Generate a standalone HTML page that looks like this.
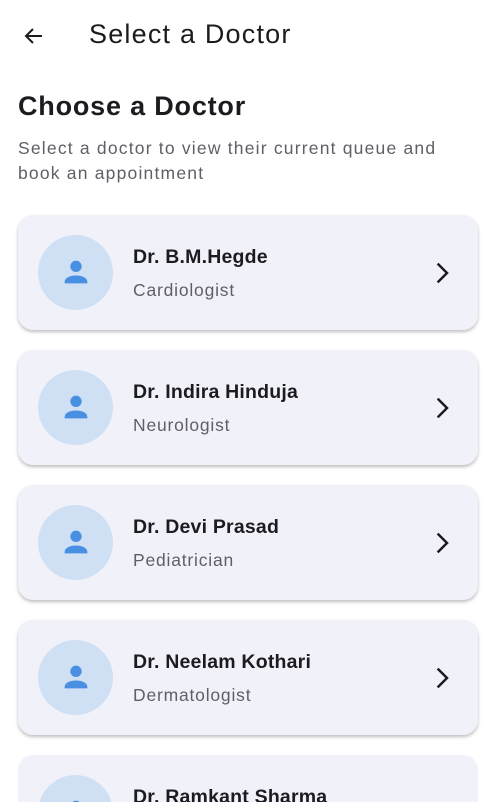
<!DOCTYPE html>
<html><head><style>
html,body{margin:0;width:494px;height:802px;overflow:hidden}
body{background:#fff;font-family:"Liberation Sans",sans-serif;position:relative}
.t{position:absolute;white-space:nowrap}
.card{position:absolute;left:18px;width:460px;height:115px;background:#f1f2f9;border-radius:15px;box-shadow:0 2px 3px rgba(0,0,0,.25)}
.last{height:47px;border-radius:15px 15px 0 0;box-shadow:none}
.av{position:absolute;left:20px;top:20px;width:75px;height:75px;border-radius:50%;background:#d0e0f4;overflow:hidden}
.last .av{height:75px}
.av svg{position:absolute;left:21px;top:20px}
.n{position:absolute;left:115px;top:31px;font-size:19.5px;font-weight:bold;color:#1c1b1f;letter-spacing:0.2px}
.s{position:absolute;left:115px;top:65px;font-size:17.5px;color:#605e66;letter-spacing:.8px}
.ch{position:absolute;left:409px;top:43px}
</style></head><body>
<svg class="t" style="left:22px;top:24px" width="24" height="24" viewBox="0 0 24 24"><path d="M20 12H4M11 5l-7 7 7 7" fill="none" stroke="#1c1b1f" stroke-width="2"/></svg>
<div class="t" style="left:89px;top:19px;font-size:27px;color:#1c1b1f;letter-spacing:1.2px">Select a Doctor</div>
<div class="t" style="left:18px;top:91px;font-size:27px;font-weight:bold;color:#1c1b1f;letter-spacing:0.8px">Choose a Doctor</div>
<div class="t" style="left:18px;top:136px;font-size:17.5px;color:#605e66;line-height:25px;letter-spacing:1.2px">Select a doctor to view their current queue and<br>book an appointment</div>

<div class="card" style="top:215px"><div class="av"><svg width="34" height="34" viewBox="0 0 24 24"><circle cx="12" cy="8" r="4" fill="#4a90e2"/><path d="M4 20v-1c0-3 4-4.5 8-4.5s8 1.5 8 4.5v1z" fill="#4a90e2"/></svg></div><div class="n">Dr. B.M.Hegde</div><div class="s">Cardiologist</div><svg class="ch" width="30" height="30" viewBox="0 0 24 24"><path d="M8.5 4.5l7.5 7.5-7.5 7.5" fill="none" stroke="#1c1b1f" stroke-width="2"/></svg></div>
<div class="card" style="top:350px"><div class="av"><svg width="34" height="34" viewBox="0 0 24 24"><circle cx="12" cy="8" r="4" fill="#4a90e2"/><path d="M4 20v-1c0-3 4-4.5 8-4.5s8 1.5 8 4.5v1z" fill="#4a90e2"/></svg></div><div class="n">Dr. Indira Hinduja</div><div class="s">Neurologist</div><svg class="ch" width="30" height="30" viewBox="0 0 24 24"><path d="M8.5 4.5l7.5 7.5-7.5 7.5" fill="none" stroke="#1c1b1f" stroke-width="2"/></svg></div>
<div class="card" style="top:485px"><div class="av"><svg width="34" height="34" viewBox="0 0 24 24"><circle cx="12" cy="8" r="4" fill="#4a90e2"/><path d="M4 20v-1c0-3 4-4.5 8-4.5s8 1.5 8 4.5v1z" fill="#4a90e2"/></svg></div><div class="n">Dr. Devi Prasad</div><div class="s">Pediatrician</div><svg class="ch" width="30" height="30" viewBox="0 0 24 24"><path d="M8.5 4.5l7.5 7.5-7.5 7.5" fill="none" stroke="#1c1b1f" stroke-width="2"/></svg></div>
<div class="card" style="top:620px"><div class="av"><svg width="34" height="34" viewBox="0 0 24 24"><circle cx="12" cy="8" r="4" fill="#4a90e2"/><path d="M4 20v-1c0-3 4-4.5 8-4.5s8 1.5 8 4.5v1z" fill="#4a90e2"/></svg></div><div class="n">Dr. Neelam Kothari</div><div class="s">Dermatologist</div><svg class="ch" width="30" height="30" viewBox="0 0 24 24"><path d="M8.5 4.5l7.5 7.5-7.5 7.5" fill="none" stroke="#1c1b1f" stroke-width="2"/></svg></div>
<div class="card last" style="top:755px;overflow:hidden"><div class="av"><svg width="34" height="34" viewBox="0 0 24 24"><circle cx="12" cy="8" r="4" fill="#4a90e2"/><path d="M4 20v-1c0-3 4-4.5 8-4.5s8 1.5 8 4.5v1z" fill="#4a90e2"/></svg></div><div class="n">Dr. Ramkant Sharma</div><svg class="ch" width="30" height="30" viewBox="0 0 24 24"><path d="M8.5 4.5l7.5 7.5-7.5 7.5" fill="none" stroke="#1c1b1f" stroke-width="2"/></svg></div>
</body></html>
